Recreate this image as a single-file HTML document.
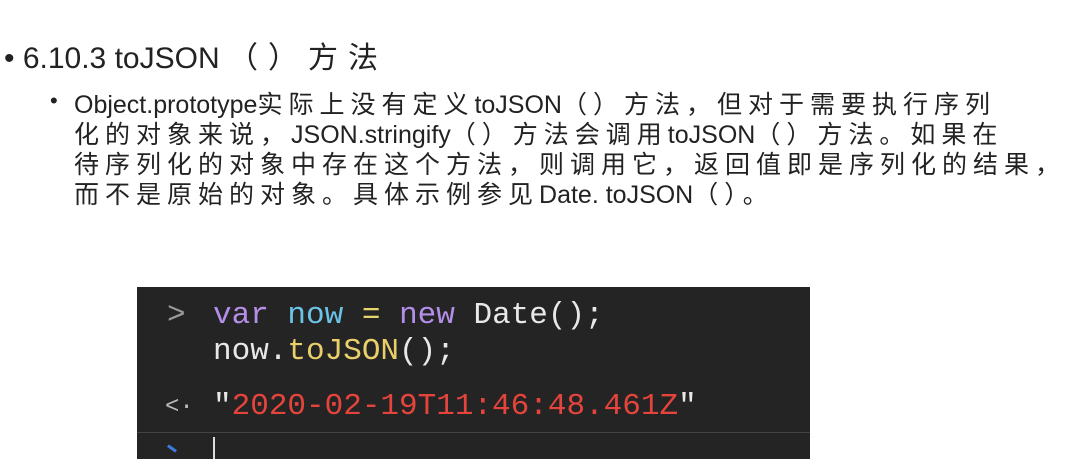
<!DOCTYPE html>
<html><head><meta charset="utf-8"><style>
body{margin:0;width:1090px;height:470px;background:#fff;overflow:hidden;position:relative;font-family:"Liberation Sans","Noto Sans CJK SC",sans-serif;color:#222}
.t{position:absolute;white-space:nowrap}
.c{letter-spacing:6px}
.l{font-size:25px;left:74px}
#box{position:absolute;left:137px;top:287px;width:673px;height:172px;background:#242424;font-family:"Liberation Mono","DejaVu Sans Mono",monospace;font-size:31px;color:#e8e8e8}
#box div{position:absolute;white-space:nowrap}
</style></head><body>
<div class="t" style="left:4px;top:33px;font-size:30px">• 6.10.3 toJSON <span style="letter-spacing:10px">（）方法</span></div>
<div class="t" style="left:50px;top:88px;font-size:22px">•</div>
<div class="t l" style="top:85px">Object.prototype<span class="c">实际上没有定义</span>toJSON<span class="c">（）方法，但对于需要执行序列</span></div>
<div class="t l" style="top:115px"><span class="c">化的对象来说，</span>JSON.stringify<span class="c">（）方法会调用</span>toJSON<span class="c">（）方法。如果在</span></div>
<div class="t l" style="top:145px"><span class="c">待序列化的对象中存在这个方法，则调用它，返回值即是序列化的结果，</span></div>
<div class="t l" style="top:175px"><span class="c">而不是原始的对象。具体示例参见</span>Date. toJSON<span class="c">（）。</span></div>
<div id="box">
<div style="left:30px;top:11px;color:#999">&gt;</div>
<div style="left:76px;top:11px"><span style="color:#b48ee8">var</span> <span style="color:#6cc3e8">now</span> <span style="color:#e8d66c">=</span> <span style="color:#b48ee8">new</span> Date();</div>
<div style="left:76px;top:47px">now.<span style="color:#e8cf6a">toJSON</span>();</div>
<div style="left:28px;color:#bbb;font-size:24px;top:107px">&lt;·</div>
<div style="left:76px;top:102px">"<span style="color:#e5443d">2020-02-19T11:46:48.461Z</span>"</div>
<div style="left:0;top:145px;width:673px;height:1px;background:#444"></div>
<div style="left:76px;top:150px;width:2px;height:22px;background:#ddd"></div>
<div style="left:30px;top:160px;width:10px;height:3px;background:#3b7be0;transform:rotate(35deg)"></div>
</div>
</body></html>
